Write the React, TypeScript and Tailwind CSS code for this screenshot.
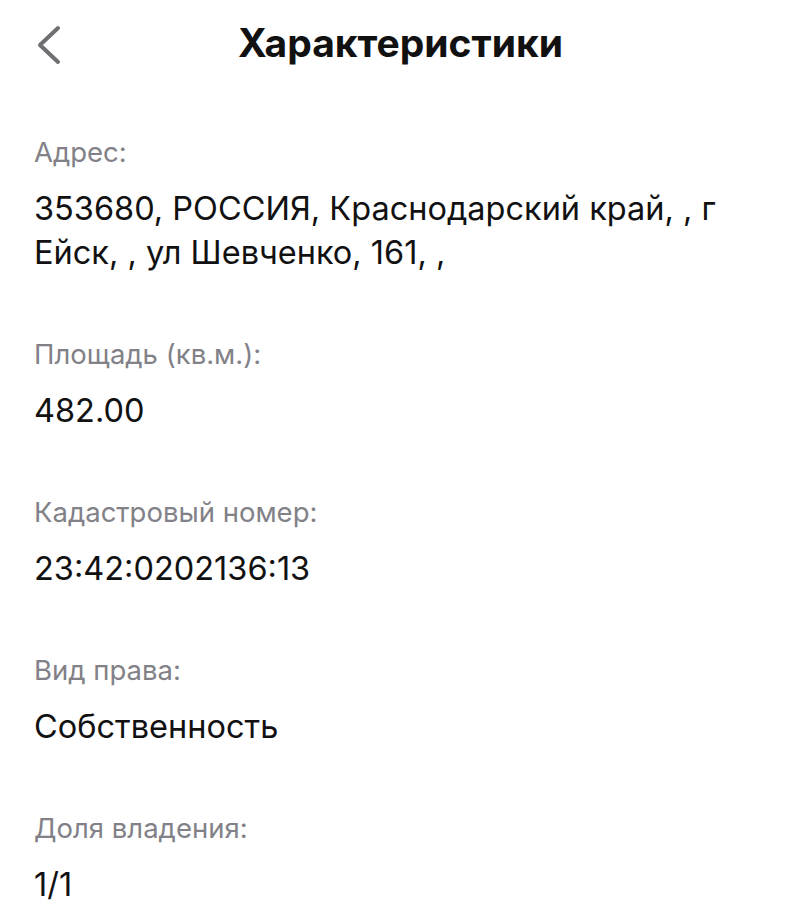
import React from "react";

const FIELDS: { label: string; value: string }[] = [
    {
        label: "Адрес:",
        value: "353680, РОССИЯ, Краснодарский край, , г Ейск, , ул Шевченко, 161, ,",
    },
    { label: "Площадь (кв.м.):", value: "482.00" },
    { label: "Кадастровый номер:", value: "23:42:0202136:13" },
    { label: "Вид права:", value: "Собственность" },
    { label: "Доля владения:", value: "1/1" },
];

function Field({ label, value }: { label: string; value: string }) {
    return (
        <div className="flex flex-col">
            <div className="text-[27.5px] leading-[32px] text-[#818187]">
                {label}
            </div>
            <div className="mt-[19px] text-[32.5px] leading-[44px] text-[#111111]">
                {value}
            </div>
        </div>
    );
}

export default function App() {
    return (
        <div
            className="min-h-[900px] w-full bg-white"
            style={{ fontFamily: "Inter, 'Noto Sans', sans-serif" }}
        >
            <div className="relative flex h-[90px] items-start justify-center pt-[21px]">
                <button className="absolute left-[34px] top-[24px] flex h-[42px] w-[30px] items-center justify-center">
                    <svg width="30" height="42" viewBox="0 0 30 42" fill="none">
                        <path
                            d="M24 4 L6 21 L24 38"
                            stroke="#6e6e73"
                            strokeWidth="4"
                            strokeLinecap="round"
                            strokeLinejoin="round"
                        />
                    </svg>
                </button>
                <h1 className="text-[39px] font-bold leading-[44px] text-[#111111]">
                    Характеристики
                </h1>
            </div>
            <div className="flex flex-col gap-[63px] px-[34px] pt-[46px]">
                {FIELDS.map((f) => (
                    <Field key={f.label} label={f.label} value={f.value} />
                ))}
            </div>
        </div>
    );
}
